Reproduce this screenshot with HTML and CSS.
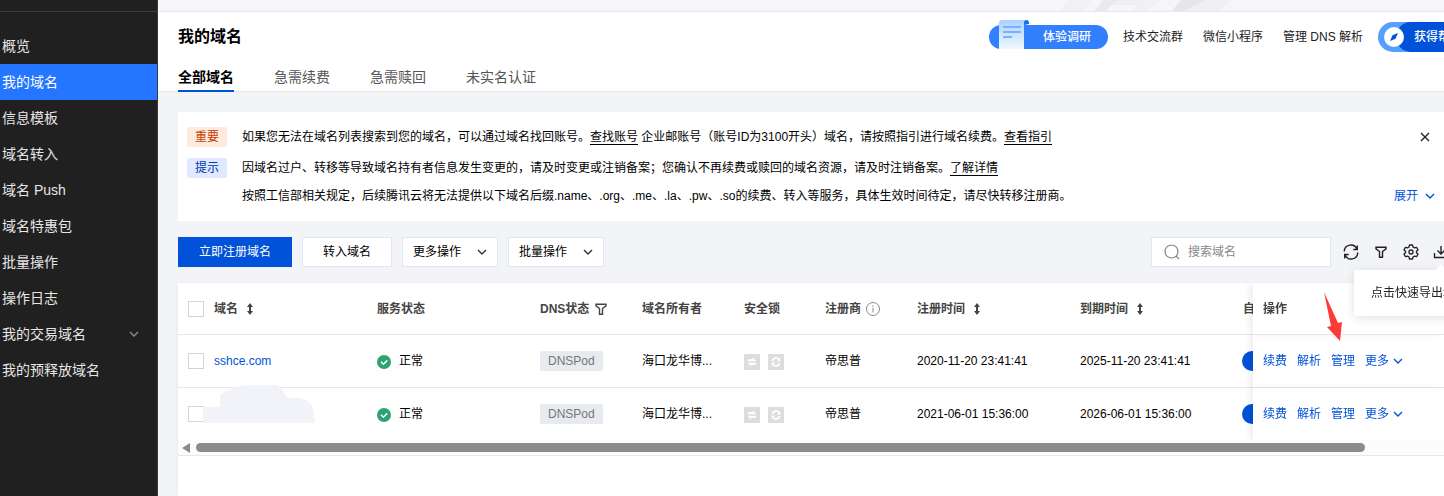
FILE: index.html
```html
<!DOCTYPE html>
<html lang="zh-CN">
<head>
    <meta charset="UTF-8">
    <meta name="viewport" content="width=device-width, initial-scale=1.0">
    <title>我的域名</title>
    <link rel="stylesheet" href="styles.css">
</head>
<body>
    <!-- shared icons -->
    <svg class="sprite" aria-hidden="true">
        <symbol id="chevron" viewBox="0 0 10 10"><path d="M1 3l4 4 4-4" fill="none" stroke="currentColor" stroke-width="1.4"/></symbol>
        <symbol id="sort" viewBox="0 0 8 12"><path d="M4 0l3 4H5v4h2l-3 4-3-4h2V4H1z" fill="currentColor"/></symbol>
        <symbol id="filter" viewBox="0 0 12 12"><path d="M1 1.2h10v1.600L7.500 5.500v5.700h-3V5.500L1 2.800z" fill="none" stroke="currentColor" stroke-width="1.400"/></symbol>
        <symbol id="ok" viewBox="0 0 14 14"><circle cx="7" cy="7" r="7" fill="#2ba471"/><path d="M4 6.8L6.4 9.2 10.2 5.4" fill="none" stroke="#fff" stroke-width="1.5"/></symbol>
        <symbol id="transfer" viewBox="0 0 16 16"><path fill="#ddd" d="M0 0h16v16H0z"/><path d="M4 7.200V5.200h4.800V3.200L12.400 7.200zM12 8.800v2H7.200v2L3.600 8.800z" fill="#fff"/></symbol>
        <symbol id="renew" viewBox="0 0 16 16"><path fill="#ddd" d="M0 0h16v16H0z"/><path d="M4.4 7a3.7 3.7 0 0 1 6.6-1.5M11.6 9A3.7 3.7 0 0 1 5 10.5" fill="none" stroke="#fff" stroke-width="1.7"/><path d="M12.3 4v3.4H8.9zM3.7 12V8.600h3.400z" fill="#fff"/></symbol>
    </svg>

    <div class="app">
        <aside class="sidebar">
            <nav class="menu">
                <a href="#">概览</a>
                <a href="#" class="active">我的域名</a>
                <a href="#">信息模板</a>
                <a href="#">域名转入</a>
                <a href="#">域名 Push</a>
                <a href="#">域名特惠包</a>
                <a href="#">批量操作</a>
                <a href="#">操作日志</a>
                <a href="#">我的交易域名<svg class="chevron"><use href="#chevron"/></svg></a>
                <a href="#">我的预释放域名</a>
            </nav>
        </aside>

        <main class="main">
            <div class="banner">
                <svg viewBox="0 0 240 11" width="240" height="11">
                    <path d="M0 11L9 0h22l-8 11z" fill="#f0f1f3"/>
                    <path d="M34 11L43 0h17l-9 5-5 6z" fill="#e9eaec"/>
                    <path d="M51 5l9-5h20l4 5z" fill="#eeeff1"/>
                    <path d="M72 11l9-11h20l-14 11z" fill="#f0f1f3"/>
                    <path d="M112 11l9-11h26l-24 11z" fill="#e5e6e8"/>
                    <path d="M123 11L147 0h24l-12 11z" fill="#eff0f2"/>
                </svg>
            </div>

            <header class="header">
                <div class="title-row">
                    <h1>我的域名</h1>
                    <div class="header-links">
                        <a href="#" class="survey">
                            <svg class="survey-icon" viewBox="0 0 32 29">
                                <defs>
                                    <linearGradient id="paper" x1="0" y1="0" x2="0" y2="1">
                                        <stop offset="0" stop-color="#a9d1ff"/>
                                        <stop offset="1" stop-color="#f2f8ff"/>
                                    </linearGradient>
                                </defs>
                                <path d="M26 0h2a3 3 0 0 1 3 4l-5 1z" fill="#1670e8"/>
                                <path d="M1 29V3a3 3 0 0 1 3-3h24a3 3 0 0 0-2 3v26z" fill="url(#paper)"/>
                                <path d="M5 7h18M5 12h18M5 17h9" stroke="#7ab1fc" stroke-width="2"/>
                            </svg>
                            体验调研
                        </a>
                        <a href="#">技术交流群</a>
                        <a href="#">微信小程序</a>
                        <a href="#">管理 DNS 解析</a>
                        <button class="help">
                            <svg class="compass" viewBox="0 0 20 20"><circle cx="10" cy="10" r="10" fill="#fff"/><path d="M14 6l-2.500 5.700L6 14l2.500-5.700z" fill="#0052d9"/></svg>
                            <span>获得帮助</span>
                        </button>
                    </div>
                </div>
                <nav class="tabs">
                    <a href="#" class="active">全部域名</a>
                    <a href="#">急需续费</a>
                    <a href="#">急需赎回</a>
                    <a href="#">未实名认证</a>
                </nav>
            </header>

            <div class="content">
                <section class="notice">
                    <div class="notice-row">
                        <span class="tag important">重要</span>
                        <p>如果您无法在域名列表搜索到您的域名，可以通过域名找回账号。<a href="#">查找账号</a> 企业邮账号（账号ID为3100开头）域名，请按照指引进行域名续费。<a href="#">查看指引</a></p>
                        <button class="close" aria-label="关闭"><svg viewBox="0 0 10 10" width="10" height="10"><path d="M1 1l8 8M9 1L1 9" stroke="currentColor" stroke-width="1.4"/></svg></button>
                    </div>
                    <div class="notice-row">
                        <span class="tag tip">提示</span>
                        <p>因域名过户、转移等导致域名持有者信息发生变更的，请及时变更或注销备案；您确认不再续费或赎回的域名资源，请及时注销备案。<a href="#">了解详情</a></p>
                    </div>
                    <div class="notice-row last">
                        <p>按照工信部相关规定，后续腾讯云将无法提供以下域名后缀.name、.org、.me、.la、.pw、.so的续费、转入等服务，具体生效时间待定，请尽快转移注册商。</p>
                        <button class="expand">展开<svg class="chevron"><use href="#chevron"/></svg></button>
                    </div>
                </section>

                <div class="toolbar">
                    <button class="btn primary">立即注册域名</button>
                    <button class="btn">转入域名</button>
                    <button class="btn dropdown">更多操作<svg class="chevron"><use href="#chevron"/></svg></button>
                    <button class="btn dropdown">批量操作<svg class="chevron"><use href="#chevron"/></svg></button>
                    <div class="search">
                        <svg viewBox="0 0 16 16" width="16" height="16"><circle cx="7.500" cy="7.500" r="6.500" fill="none" stroke="#888" stroke-width="1.200"/><path d="M12 12l3 3" stroke="#888" stroke-width="1.300"/></svg>
                        <input type="text" placeholder="搜索域名" aria-label="搜索域名">
                    </div>
                    <div class="tools">
                        <button aria-label="刷新"><svg viewBox="0 0 16 16"><path d="M1.300 7.500A6.500 6.500 0 0 1 13.800 5M14.700 8.500A6.500 6.500 0 0 1 2.200 11M14.300 1.500v4h-4M1.700 14.500v-4h4" fill="none" stroke="currentColor" stroke-width="1.400"/></svg></button>
                        <button aria-label="筛选"><svg class="small"><use href="#filter"/></svg></button>
                        <button aria-label="设置"><svg viewBox="0 0 16 16"><path d="M6.500 1h3l.5 2 1.500.9 2-.6 1.500 2.600L13.500 7.300v1.400l1.500 1.400-1.500 2.600-2-.6-1.500.9-.5 2h-3L6 13l-1.500-.9-2 .6L1 10.100l1.500-1.400V7.300L1 5.900l1.500-2.600 2 .6L6 3z" fill="none" stroke="currentColor" stroke-width="1.3" stroke-linejoin="round"/><circle cx="8" cy="8" r="2" fill="none" stroke="currentColor" stroke-width="1.3"/></svg></button>
                        <button aria-label="导出"><svg viewBox="0 0 16 16"><path d="M8 2v8M4.500 6.500L8 10l3.500-3.500M1.500 9v4.500h13V9" fill="none" stroke="currentColor" stroke-width="1.4"/></svg></button>
                        <div class="tooltip">点击快速导出域名</div>
                    </div>
                </div>

                <section class="panel">
                    <div class="table-wrap">
                        <table>
                            <colgroup>
                                <col class="c-check"><col class="c-wide"><col class="c-wide"><col class="c-mid"><col class="c-mid">
                                <col class="c-lock"><col class="c-reg"><col class="c-wide"><col class="c-wide"><col><col class="c-action">
                            </colgroup>
                            <thead>
                                <tr>
                                    <th class="check"><input type="checkbox" aria-label="全选"></th>
                                    <th>域名<svg class="sort"><use href="#sort"/></svg></th>
                                    <th>服务状态</th>
                                    <th>DNS状态<svg class="filter"><use href="#filter"/></svg></th>
                                    <th>域名所有者</th>
                                    <th>安全锁</th>
                                    <th>注册商<svg class="info" viewBox="0 0 14 14"><circle cx="7" cy="7" r="6.500" fill="none" stroke="#888"/><path d="M7 6v4.500M7 3.500V5" stroke="#888"/></svg></th>
                                    <th>注册时间<svg class="sort"><use href="#sort"/></svg></th>
                                    <th>到期时间<svg class="sort"><use href="#sort"/></svg></th>
                                    <th>自动续费</th>
                                    <th class="action">操作
                                        <svg class="pointer" viewBox="0 0 20 50"><path d="M1 0l14 31 4-1-2 19L4 35l4-1z" fill="#fb3b37"/></svg>
                                    </th>
                                </tr>
                            </thead>
                            <tbody>
                                <tr>
                                    <td class="check"><input type="checkbox" aria-label="选择 sshce.com"></td>
                                    <td><a href="#">sshce.com</a></td>
                                    <td><svg class="ok"><use href="#ok"/></svg>正常</td>
                                    <td><span class="dns">DNSPod</span></td>
                                    <td>海口龙华博...</td>
                                    <td class="locks"><svg><use href="#transfer"/></svg><svg><use href="#renew"/></svg></td>
                                    <td>帝思普</td>
                                    <td>2020-11-20 23:41:41</td>
                                    <td>2025-11-20 23:41:41</td>
                                    <td><input type="checkbox" class="switch" aria-label="自动续费" checked></td>
                                    <td class="action"><div class="ops"><a href="#">续费</a><a href="#">解析</a><a href="#">管理</a><button>更多<svg class="chevron"><use href="#chevron"/></svg></button></div></td>
                                </tr>
                                <tr>
                                    <td class="check"><input type="checkbox" aria-label="选择域名"></td>
                                    <td class="masked"><svg class="mask" viewBox="0 0 113 38"><path d="M0 22h17V10c7-5 15-9 28-10h29c5 3 8 8 10 13h12c6 1 13 5 14 11l2 14H0z" fill="#f2f3f8"/></svg></td>
                                    <td><svg class="ok"><use href="#ok"/></svg>正常</td>
                                    <td><span class="dns">DNSPod</span></td>
                                    <td>海口龙华博...</td>
                                    <td class="locks"><svg><use href="#transfer"/></svg><svg><use href="#renew"/></svg></td>
                                    <td>帝思普</td>
                                    <td>2021-06-01 15:36:00</td>
                                    <td>2026-06-01 15:36:00</td>
                                    <td><input type="checkbox" class="switch" aria-label="自动续费" checked></td>
                                    <td class="action"><div class="ops"><a href="#">续费</a><a href="#">解析</a><a href="#">管理</a><button>更多<svg class="chevron"><use href="#chevron"/></svg></button></div></td>
                                </tr>
                            </tbody>
                        </table>
                    </div>
                    <div class="scrollbar">
                        <span class="scroll-left"></span>
                        <span class="thumb"></span>
                    </div>
                </section>
            </div>
        </main>
    </div>
</body>
</html>
```
FILE: styles.css
```css
* {
    box-sizing: border-box;
}

body {
    margin: 0;
    background-color: #f3f4f8;
    color: #000;
    font-family: "Liberation Sans", "Noto Sans CJK SC", sans-serif;
    font-size: 12px;
    line-height: 20px;
}

a {
    color: inherit;
    text-decoration: none;
}

button {
    padding: 0;
    border: none;
    background: none;
    color: inherit;
    font: inherit;
    cursor: pointer;
}

.sprite {
    position: absolute;
    width: 0;
    height: 0;
}

.chevron {
    width: 10px;
    height: 10px;
}

.app {
    display: flex;
    min-height: 100vh;
}

/* sidebar */
.sidebar {
    flex: 0 0 158px;
    padding-top: 11px;
    background-color: #202020;
    border-right: 1px solid #3a3a3a;
}

.menu {
    padding-top: 16px;
    border-top: 1px solid #3a3a3a;
}

.menu a {
    display: flex;
    align-items: center;
    justify-content: space-between;
    height: 36px;
    padding: 0 18px 0 2px;
    color: #e6e6e6;
    font-size: 14px;
}

.menu a.active {
    background-color: #2475ff;
    color: #fff;
}

.menu .chevron {
    color: #8a8a8a;
}

/* header */
.main {
    display: flex;
    flex-direction: column;
    flex: 1;
    min-width: 0;
    overflow: hidden;
}

.banner {
    display: flex;
    justify-content: flex-end;
    height: 12px;
    padding-right: 144px;
    background-color: #f5f6f8;
    border-bottom: 1px solid #e7e8ee;
}

.header {
    padding-left: 20px;
    background-color: #fff;
    border-bottom: 1px solid #e5e7ee;
}

.title-row {
    display: flex;
    align-items: center;
    justify-content: space-between;
    height: 50px;
}

h1 {
    margin: 0;
    font-size: 16px;
}

.header-links {
    display: flex;
    align-items: center;
    gap: 20px;
    margin-right: -38px;
    color: #222;
    white-space: nowrap;
}

.survey {
    position: relative;
    width: 119px;
    height: 24px;
    margin-right: -5px;
    padding-left: 54px;
    border-radius: 12px;
    background-color: #3380ff;
    color: #fff;
    font-weight: 500;
    line-height: 24px;
}

.survey-icon {
    position: absolute;
    left: 9px;
    bottom: 0;
    width: 32px;
    height: 29px;
}

.help {
    position: relative;
    height: 30px;
    margin-left: -5px;
    padding-left: 18px;
    border-radius: 15px;
    background-color: #559fff;
    color: #fff;
    font-weight: 500;
}

.help span {
    display: block;
    height: 30px;
    padding: 0 20px 0 18px;
    border-radius: 15px;
    background-color: #0052d9;
    line-height: 30px;
}

.compass {
    position: absolute;
    left: 6px;
    top: 5px;
    width: 20px;
    height: 20px;
}

.tabs {
    display: flex;
    gap: 40px;
    color: #555;
    font-size: 14px;
}

.tabs a {
    height: 30px;
    margin-bottom: -1px;
    line-height: 30px;
}

.tabs a.active {
    border-bottom: 2px solid #0052d9;
    color: #000;
    font-weight: bold;
}

.content {
    display: flex;
    flex-direction: column;
    flex: 1;
    padding: 20px 0 0 20px;
}

/* notice */
.notice {
    display: flex;
    flex-direction: column;
    gap: 11px;
    padding: 15px 9px;
    background-color: #fff;
}

.notice-row {
    display: flex;
    align-items: center;
    gap: 15px;
    height: 20px;
}

.notice-row.last {
    margin-top: -3px;
    padding-left: 55px;
}

.notice p {
    margin: 0;
    white-space: nowrap;
}

.notice p a {
    border-bottom: 1px solid #000;
}

.tag {
    width: 40px;
    border-radius: 2px;
    text-align: center;
}

.important {
    background-color: #ffebdd;
    color: #c83c00;
}

.tip {
    background-color: #e0e9ff;
    color: #0034b5;
}

.close {
    display: flex;
    margin-left: auto;
    margin-right: 5px;
    color: #222;
}

.expand {
    display: flex;
    align-items: center;
    gap: 7px;
    margin-left: auto;
    color: #0052d9;
}

/* toolbar */
.toolbar {
    display: flex;
    align-items: center;
    gap: 10px;
    margin: 16px 0;
}

.btn {
    height: 30px;
    padding: 0 20px;
    border: 1px solid #e3e6ee;
    background-color: #fff;
    white-space: nowrap;
}

.btn.primary {
    border-color: #0052d9;
    background-color: #0052d9;
    color: #fff;
}

.btn.dropdown {
    display: flex;
    align-items: center;
    gap: 16px;
    padding: 0 10px;
}

.btn .chevron {
    color: #333;
}

.search {
    display: flex;
    align-items: center;
    gap: 8px;
    width: 180px;
    height: 30px;
    margin-left: auto;
    padding: 0 12px;
    border: 1px solid #e3e6ee;
    background-color: #fff;
}

.search svg {
    flex: none;
}

.search input {
    flex: 1;
    min-width: 0;
    padding: 0;
    border: none;
    outline: none;
    font: inherit;
}

.search input::placeholder {
    color: #888;
}

.tools {
    position: relative;
    display: flex;
    gap: 14px;
    margin: 0 -5px 0 2px;
    color: #222;
}

.tools button {
    display: flex;
    align-items: center;
    justify-content: center;
    width: 16px;
    height: 16px;
}

.tools svg {
    width: 16px;
    height: 16px;
}

.tools svg.small {
    width: 12px;
    height: 12px;
}

.tooltip {
    position: absolute;
    top: 26px;
    left: 11px;
    z-index: 5;
    padding: 13px 17px;
    background-color: #fff;
    box-shadow: 0 2px 10px rgba(0, 0, 0, 0.12);
    white-space: nowrap;
}

.tooltip::before {
    content: "";
    position: absolute;
    top: -4px;
    left: 83px;
    width: 8px;
    height: 8px;
    background-color: #fff;
    transform: rotate(45deg);
}

/* domain table */
.panel {
    flex: 1;
    background-color: #fff;
    box-shadow: 0 1px 3px rgba(0, 0, 0, 0.08);
}

.table-wrap {
    overflow: hidden;
}

table {
    width: 100%;
    min-width: 1366px;
    border-collapse: separate;
    border-spacing: 0;
    table-layout: fixed;
}

.c-check {
    width: 26px;
}

.c-wide {
    width: 163px;
}

.c-mid {
    width: 102px;
}

.c-lock {
    width: 81px;
}

.c-reg {
    width: 92px;
}

.c-action {
    width: 191px;
}

th,
td {
    height: 53px;
    padding: 0 10px;
    border-bottom: 1px solid #e5e7ee;
    text-align: left;
    white-space: nowrap;
    vertical-align: middle;
}

th {
    height: 52px;
    color: #444;
}

tbody tr:last-child td {
    height: 52px;
    border-bottom: none;
}

td a {
    color: #0052d9;
}

th svg,
td svg {
    vertical-align: middle;
}

.check {
    padding-right: 0;
}

.check input {
    display: block;
    width: 16px;
    height: 16px;
    margin: 0;
    appearance: none;
    border: 1px solid #cfd5de;
    background-color: #fff;
}

.sort {
    width: 8px;
    height: 12px;
    margin-left: 8px;
}

.filter {
    width: 12px;
    height: 12px;
    margin-left: 6px;
}

.info {
    width: 14px;
    height: 14px;
    margin-left: 5px;
}

.ok {
    width: 14px;
    height: 14px;
    margin-right: 8px;
}

.dns {
    display: inline-block;
    padding: 0 8px;
    border-radius: 2px;
    background-color: #e7eaef;
    color: #777;
}

.locks svg {
    width: 16px;
    height: 16px;
    margin-right: 8px;
}

.masked {
    position: relative;
}

.mask {
    position: absolute;
    top: -3px;
    left: -1px;
    width: 113px;
    height: 38px;
}

.switch {
    display: block;
    width: 40px;
    height: 20px;
    margin: 0 0 0 -1px;
    appearance: none;
    border-radius: 10px;
    background-color: #0052d9;
}

.action {
    position: sticky;
    right: 0;
    z-index: 1;
    background-color: #fff;
    box-shadow: -4px 0 6px rgba(0, 0, 0, 0.06);
}

th.action {
    z-index: 2;
}

.pointer {
    position: absolute;
    top: 9px;
    left: 70px;
    width: 20px;
    height: 50px;
}

.ops {
    display: flex;
    gap: 10px;
    color: #0052d9;
}

.ops button {
    display: flex;
    align-items: center;
    gap: 4px;
}

.scrollbar {
    display: flex;
    align-items: center;
    gap: 6px;
    height: 16px;
    padding: 0 79px 0 4px;
    background-color: #fcfcfc;
    border-bottom: 1px solid #e5e7ee;
}

.scroll-left {
    border: 5px solid transparent;
    border-right: 8px solid #8b8b8b;
    border-left: 0;
}

.thumb {
    flex: 1;
    height: 9px;
    border-radius: 5px;
    background-color: #8b8b8b;
}
```
